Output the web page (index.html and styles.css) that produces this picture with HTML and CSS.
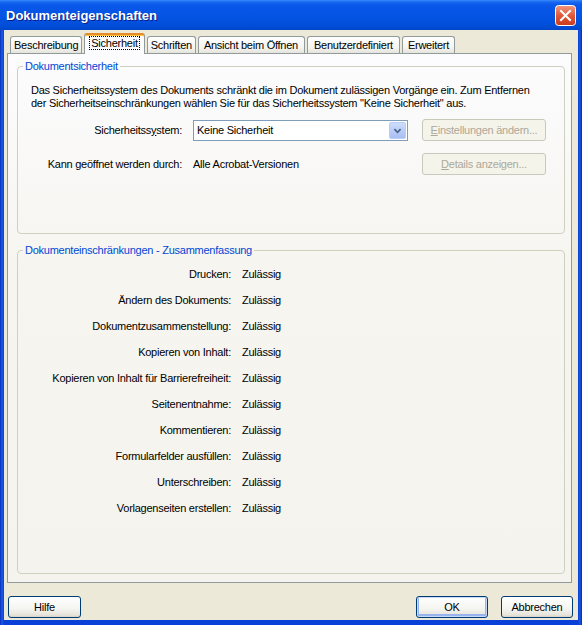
FILE: index.html
```html
<!DOCTYPE html>
<html lang="de">
<head>
<meta charset="utf-8">
<title>Dokumenteigenschaften</title>
<link rel="stylesheet" href="styles.css">
</head>
<body>
<div class="window">
  <div class="titlebar">
    <span class="title">Dokumenteigenschaften</span>
    <svg class="close" width="21" height="21" viewBox="0 0 21 21">
      <defs>
        <linearGradient id="cg" x1="0" y1="0" x2="0" y2="1">
          <stop offset="0" stop-color="#f09a80"/>
          <stop offset="0.5" stop-color="#e0593b"/>
          <stop offset="1" stop-color="#c93a1c"/>
        </linearGradient>
      </defs>
      <rect x="0.5" y="0.5" width="20" height="20" rx="3" fill="url(#cg)" stroke="#ffffff"/>
      <path d="M6 6 L15 15 M15 6 L6 15" stroke="#ffffff" stroke-width="2" stroke-linecap="square"/>
    </svg>
  </div>
  <div class="client">
    <div class="tabs">
      <div class="tab">Beschreibung</div>
      <div class="tab selected"><span class="focus">Sicherheit</span></div>
      <div class="tab">Schriften</div>
      <div class="tab wide">Ansicht beim Öffnen</div>
      <div class="tab long">Benutzerdefiniert</div>
      <div class="tab mid">Erweitert</div>
    </div>
    <div class="pane">
      <fieldset class="group security">
        <legend>Dokumentsicherheit</legend>
        <div class="group-body">
          <p class="desc">Das Sicherheitssystem des Dokuments schränkt die im Dokument zulässigen Vorgänge ein. Zum Entfernen der Sicherheitseinschränkungen wählen Sie für das Sicherheitssystem "Keine Sicherheit" aus.</p>
          <div class="form">
            <span class="label">Sicherheitss<u>y</u>stem:</span>
            <div class="combo">
              <span class="combo-text">Keine Sicherheit</span>
              <span class="combo-btn">
                <svg width="17" height="19" viewBox="0 0 17 19"><path d="M5 8 L8.5 11.5 L12 8" fill="none" stroke="#4d6185" stroke-width="2"/></svg>
              </span>
            </div>
            <span class="btn disabled"><u>E</u>instellungen ändern...</span>
            <span class="label">Kann geöffnet werden durch:</span>
            <span class="value">Alle Acrobat-Versionen</span>
            <span class="btn disabled"><u>D</u>etails anzeigen...</span>
          </div>
        </div>
      </fieldset>
      <fieldset class="group summary">
        <legend>Dokumenteinschränkungen - Zusammenfassung</legend>
        <div class="rows">
          <span class="k">Drucken:</span><span class="v">Zulässig</span>
          <span class="k">Ändern des Dokuments:</span><span class="v">Zulässig</span>
          <span class="k">Dokumentzusammenstellung:</span><span class="v">Zulässig</span>
          <span class="k">Kopieren von Inhalt:</span><span class="v">Zulässig</span>
          <span class="k">Kopieren von Inhalt für Barrierefreiheit:</span><span class="v">Zulässig</span>
          <span class="k">Seitenentnahme:</span><span class="v">Zulässig</span>
          <span class="k">Kommentieren:</span><span class="v">Zulässig</span>
          <span class="k">Formularfelder ausfüllen:</span><span class="v">Zulässig</span>
          <span class="k">Unterschreiben:</span><span class="v">Zulässig</span>
          <span class="k">Vorlagenseiten erstellen:</span><span class="v">Zulässig</span>
        </div>
      </fieldset>
    </div>
    <div class="footer">
      <span class="btn push help">Hilfe</span>
      <span class="spacer"></span>
      <span class="btn push default">OK</span>
      <span class="btn push">Abbrechen</span>
    </div>
  </div>
</div>
</body>
</html>
```
FILE: styles.css
```css
html, body {
  margin: 0;
  padding: 0;
  background: #ffffff;
}

.window {
  width: 582px;
  height: 625px;
  box-sizing: border-box;
  display: flex;
  flex-direction: column;
  background: linear-gradient(90deg, #0a2fb8 0, #1a5ae8 2px, #0840d8 4px, #0840d8 calc(100% - 4px), #1a55e0 calc(100% - 2px), #0a2a9a 100%);
  font-family: "Liberation Sans", Arial, sans-serif;
  font-size: 11px;
  letter-spacing: -0.25px;
  color: #000;
}

.titlebar {
  height: 30px;
  flex: none;
  display: flex;
  align-items: center;
  justify-content: space-between;
  padding: 0 6px 0 6px;
  background: linear-gradient(#3a8af8 0, #1868f0 2px, #0a58ea 5px, #0554e4 50%, #004ed8 85%, #0046c8 100%);
}

.title {
  color: #ffffff;
  font-weight: bold;
  font-size: 13px;
  letter-spacing: 0;
  text-shadow: 1px 1px 0 #0a1e8a;
  padding-top: 1px;
}

.close {
  display: block;
}

.client {
  flex: 1;
  margin: 0 4px 5px 4px;
  background: #ece9d8;
  display: flex;
  flex-direction: column;
  padding-top: 3px;
}

.tabs {
  height: 20px;
  flex: none;
  display: flex;
  align-items: flex-start;
  gap: 2px;
  padding-left: 6px;
  position: relative;
  z-index: 2;
}

.tab {
  box-sizing: border-box;
  height: 17px;
  margin-top: 3px;
  padding: 0 3px;
  border: 1px solid #919b9c;
  border-bottom: none;
  border-radius: 3px 3px 0 0;
  background: linear-gradient(#ffffff, #f3f3ef 70%, #e4e3dc);
  line-height: 16px;
  white-space: nowrap;
}

.tab.wide {
  padding: 0 6px 0 5px;
}

.tab.long {
  padding: 0 6px;
}

.tab.mid {
  padding: 0 5px;
}

.tab.selected {
  height: 21px;
  margin: 0 0 -1px 0;
  padding: 0 4px;
  background: #fcfcfe;
  border-top: 2px solid #e68b2c;
  box-shadow: inset 0 1px 0 #ffc73c;
  line-height: 17px;
}

.focus {
  border: 1px dotted #000;
  padding: 0 1px;
}

.pane {
  height: 530px;
  flex: none;
  box-sizing: border-box;
  margin: 0 6px 0 3px;
  border: 1px solid #919b9c;
  background: linear-gradient(#fcfcfe, #f6f5f0 40%, #f4f3ee);
  padding: 6px 6px 8px 9px;
  display: flex;
  flex-direction: column;
}

.group {
  margin: 0;
  padding: 0;
  min-width: 0;
  border: 1px solid #d0d0bf;
  border-radius: 4px;
}

.group legend {
  color: #0046d5;
  padding: 0 2px;
  margin-left: 5px;
  line-height: 13px;
}

.security {
  height: 174px;
  box-sizing: border-box;
  flex: none;
}

.group-body {
  padding: 11px 12px 0 13px;
}

.desc {
  margin: 0;
  max-width: 508px;
  line-height: 13px;
}

.form {
  margin-top: 9px;
  display: grid;
  grid-template-columns: 151px 215px 127px;
  column-gap: 11px;
  row-gap: 12px;
  align-items: center;
}

.label {
  text-align: right;
}

.combo {
  height: 21px;
  box-sizing: border-box;
  border: 1px solid #7f9db9;
  background: #ffffff;
  display: flex;
  align-items: center;
  justify-content: space-between;
  padding: 0 1px 0 3px;
}

.combo-btn {
  width: 17px;
  height: 17px;
  box-sizing: border-box;
  border: 1px solid #b9cdf8;
  border-radius: 2px;
  background: linear-gradient(#cdddfc, #b6caf6 60%, #a9bff2);
  display: flex;
  align-items: center;
  justify-content: center;
  overflow: hidden;
}

.combo-btn svg {
  display: block;
}

.btn {
  box-sizing: border-box;
  height: 22px;
  display: flex;
  align-items: center;
  justify-content: center;
  border-radius: 3px;
  white-space: nowrap;
}

.btn.disabled {
  margin-left: 3px;
  border: 1px solid #cac8bb;
  background: #f5f4ea;
  color: #aca899;
}

.summary {
  flex: 1;
  margin-top: 10px;
}

.rows {
  display: grid;
  grid-template-columns: 200px auto;
  column-gap: 11px;
  line-height: 26px;
  padding: 4px 0 0 13px;
  justify-content: start;
}

.rows .k {
  text-align: right;
  white-space: nowrap;
}

.footer {
  flex: 1;
  display: flex;
  align-items: flex-start;
  gap: 13px;
  padding: 13px 5px 0 4px;
}

.spacer {
  flex: 1;
}

.btn.push {
  width: 72px;
  border: 1px solid #003c74;
  background: linear-gradient(#ffffff, #f4f4f0 60%, #e6e4da 90%, #d6d0c5);
}

.btn.help {
  width: 73px;
}

.btn.default {
  box-shadow: inset 0 0 0 1px #c8d8f8, inset 0 -1px 0 2px #98b4ee;
}
```
